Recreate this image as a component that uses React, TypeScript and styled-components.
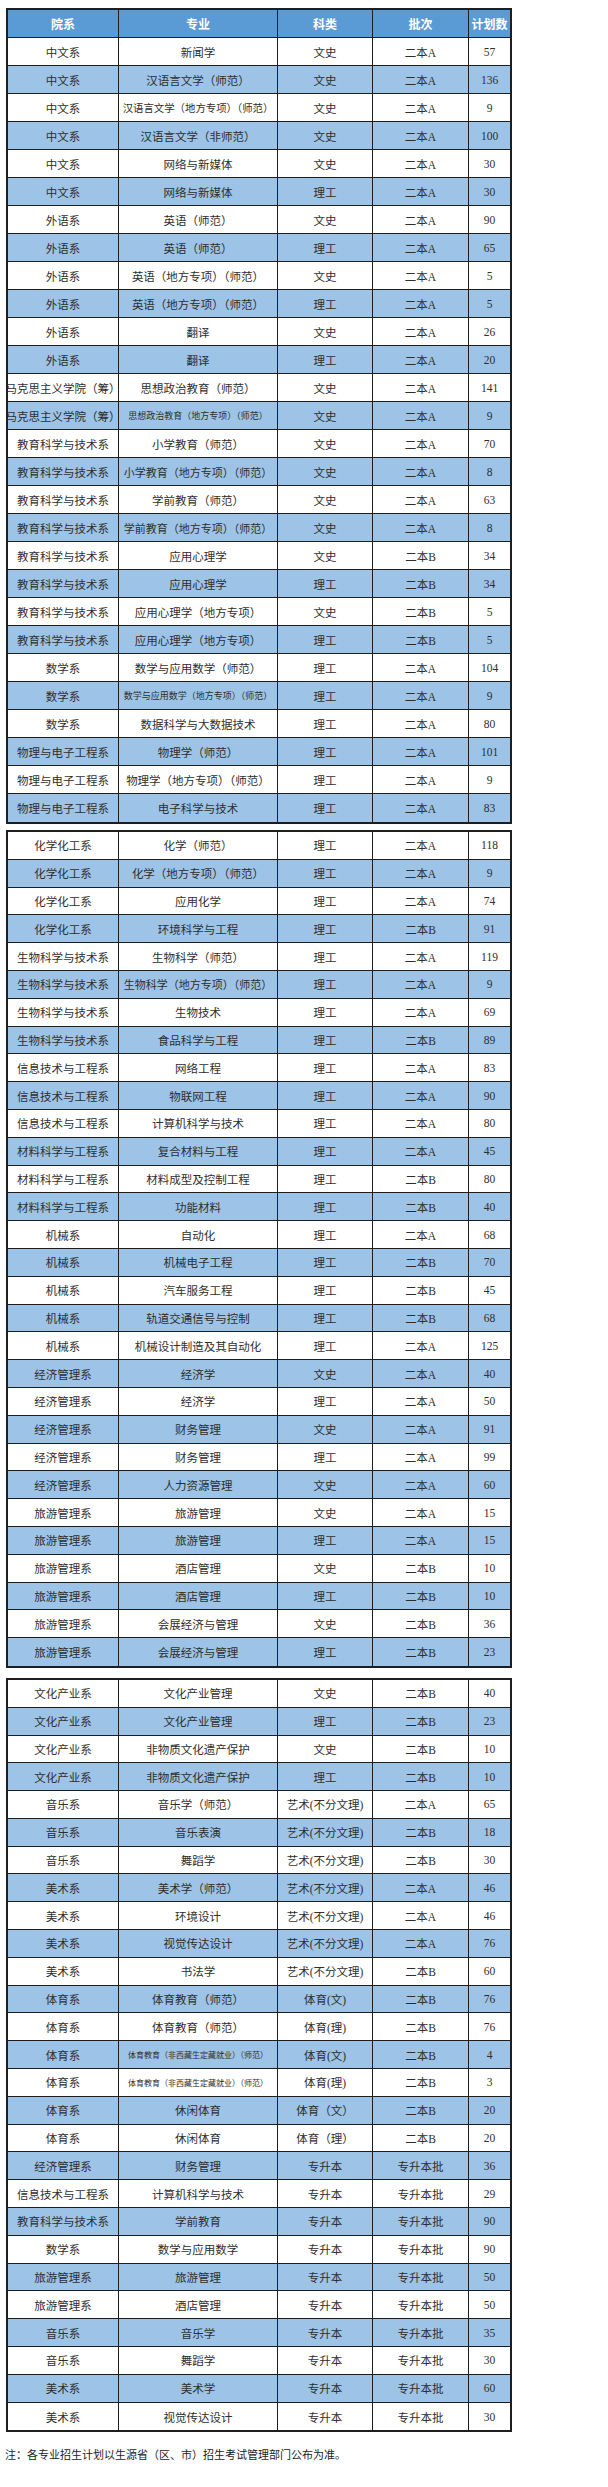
import React from "react";
import styled, { createGlobalStyle } from "styled-components";

type Row = [string, string, string, string, number, number?];

const tableOne: Row[] = [
  ["中文系", "新闻学", "文史", "二本A", 57],
  ["中文系", "汉语言文学（师范）", "文史", "二本A", 136],
  ["中文系", "汉语言文学（地方专项）（师范）", "文史", "二本A", 9, 10.4],
  ["中文系", "汉语言文学（非师范）", "文史", "二本A", 100],
  ["中文系", "网络与新媒体", "文史", "二本A", 30],
  ["中文系", "网络与新媒体", "理工", "二本A", 30],
  ["外语系", "英语（师范）", "文史", "二本A", 90],
  ["外语系", "英语（师范）", "理工", "二本A", 65],
  ["外语系", "英语（地方专项）（师范）", "文史", "二本A", 5],
  ["外语系", "英语（地方专项）（师范）", "理工", "二本A", 5],
  ["外语系", "翻译", "文史", "二本A", 26],
  ["外语系", "翻译", "理工", "二本A", 20],
  ["马克思主义学院（筹）", "思想政治教育（师范）", "文史", "二本A", 141],
  ["马克思主义学院（筹）", "思想政治教育（地方专项）（师范）", "文史", "二本A", 9, 9],
  ["教育科学与技术系", "小学教育（师范）", "文史", "二本A", 70],
  ["教育科学与技术系", "小学教育（地方专项）（师范）", "文史", "二本A", 8, 11],
  ["教育科学与技术系", "学前教育（师范）", "文史", "二本A", 63],
  ["教育科学与技术系", "学前教育（地方专项）（师范）", "文史", "二本A", 8, 11],
  ["教育科学与技术系", "应用心理学", "文史", "二本B", 34],
  ["教育科学与技术系", "应用心理学", "理工", "二本B", 34],
  ["教育科学与技术系", "应用心理学（地方专项）", "文史", "二本B", 5],
  ["教育科学与技术系", "应用心理学（地方专项）", "理工", "二本B", 5],
  ["数学系", "数学与应用数学（师范）", "理工", "二本A", 104],
  ["数学系", "数学与应用数学（地方专项）（师范）", "理工", "二本A", 9, 9],
  ["数学系", "数据科学与大数据技术", "理工", "二本A", 80],
  ["物理与电子工程系", "物理学（师范）", "理工", "二本A", 101],
  ["物理与电子工程系", "物理学（地方专项）（师范）", "理工", "二本A", 9],
  ["物理与电子工程系", "电子科学与技术", "理工", "二本A", 83],
];

const tableTwo: Row[] = [
  ["化学化工系", "化学（师范）", "理工", "二本A", 118],
  ["化学化工系", "化学（地方专项）（师范）", "理工", "二本A", 9],
  ["化学化工系", "应用化学", "理工", "二本A", 74],
  ["化学化工系", "环境科学与工程", "理工", "二本B", 91],
  ["生物科学与技术系", "生物科学（师范）", "理工", "二本A", 119],
  ["生物科学与技术系", "生物科学（地方专项）（师范）", "理工", "二本A", 9, 11],
  ["生物科学与技术系", "生物技术", "理工", "二本A", 69],
  ["生物科学与技术系", "食品科学与工程", "理工", "二本B", 89],
  ["信息技术与工程系", "网络工程", "理工", "二本A", 83],
  ["信息技术与工程系", "物联网工程", "理工", "二本A", 90],
  ["信息技术与工程系", "计算机科学与技术", "理工", "二本A", 80],
  ["材料科学与工程系", "复合材料与工程", "理工", "二本A", 45],
  ["材料科学与工程系", "材料成型及控制工程", "理工", "二本B", 80],
  ["材料科学与工程系", "功能材料", "理工", "二本B", 40],
  ["机械系", "自动化", "理工", "二本A", 68],
  ["机械系", "机械电子工程", "理工", "二本B", 70],
  ["机械系", "汽车服务工程", "理工", "二本B", 45],
  ["机械系", "轨道交通信号与控制", "理工", "二本B", 68],
  ["机械系", "机械设计制造及其自动化", "理工", "二本A", 125],
  ["经济管理系", "经济学", "文史", "二本A", 40],
  ["经济管理系", "经济学", "理工", "二本A", 50],
  ["经济管理系", "财务管理", "文史", "二本A", 91],
  ["经济管理系", "财务管理", "理工", "二本A", 99],
  ["经济管理系", "人力资源管理", "文史", "二本A", 60],
  ["旅游管理系", "旅游管理", "文史", "二本A", 15],
  ["旅游管理系", "旅游管理", "理工", "二本A", 15],
  ["旅游管理系", "酒店管理", "文史", "二本B", 10],
  ["旅游管理系", "酒店管理", "理工", "二本B", 10],
  ["旅游管理系", "会展经济与管理", "文史", "二本B", 36],
  ["旅游管理系", "会展经济与管理", "理工", "二本B", 23],
];

const tableThree: Row[] = [
  ["文化产业系", "文化产业管理", "文史", "二本B", 40],
  ["文化产业系", "文化产业管理", "理工", "二本B", 23],
  ["文化产业系", "非物质文化遗产保护", "文史", "二本B", 10],
  ["文化产业系", "非物质文化遗产保护", "理工", "二本B", 10],
  ["音乐系", "音乐学（师范）", "艺术(不分文理)", "二本A", 65],
  ["音乐系", "音乐表演", "艺术(不分文理)", "二本B", 18],
  ["音乐系", "舞蹈学", "艺术(不分文理)", "二本B", 30],
  ["美术系", "美术学（师范）", "艺术(不分文理)", "二本A", 46],
  ["美术系", "环境设计", "艺术(不分文理)", "二本A", 46],
  ["美术系", "视觉传达设计", "艺术(不分文理)", "二本A", 76],
  ["美术系", "书法学", "艺术(不分文理)", "二本B", 60],
  ["体育系", "体育教育（师范）", "体育(文)", "二本B", 76],
  ["体育系", "体育教育（师范）", "体育(理)", "二本B", 76],
  ["体育系", "体育教育（非西藏生定藏就业）（师范）", "体育(文)", "二本B", 4, 8],
  ["体育系", "体育教育（非西藏生定藏就业）（师范）", "体育(理)", "二本B", 3, 8],
  ["体育系", "休闲体育", "体育（文）", "二本B", 20],
  ["体育系", "休闲体育", "体育（理）", "二本B", 20],
  ["经济管理系", "财务管理", "专升本", "专升本批", 36],
  ["信息技术与工程系", "计算机科学与技术", "专升本", "专升本批", 29],
  ["教育科学与技术系", "学前教育", "专升本", "专升本批", 90],
  ["数学系", "数学与应用数学", "专升本", "专升本批", 90],
  ["旅游管理系", "旅游管理", "专升本", "专升本批", 50],
  ["旅游管理系", "酒店管理", "专升本", "专升本批", 50],
  ["音乐系", "音乐学", "专升本", "专升本批", 35],
  ["音乐系", "舞蹈学", "专升本", "专升本批", 30],
  ["美术系", "美术学", "专升本", "专升本批", 60],
  ["美术系", "视觉传达设计", "专升本", "专升本批", 30],
];

const headers = ["院系", "专业", "科类", "批次", "计划数"];

const GlobalStyle = createGlobalStyle`
  html, body {
    margin: 0;
    padding: 0;
    background: #ffffff;
  }
`;

const Page = styled.div`
  width: 608px;
  padding: 8px 0 30px 6px;
  box-sizing: border-box;
  display: flex;
  flex-direction: column;
  font-family: "Liberation Serif", "Noto Sans CJK SC", serif;
`;

const Table = styled.div<{ $gap: number }>`
  width: 506px;
  box-sizing: border-box;
  border: 2px solid #1e1e1e;
  display: flex;
  flex-direction: column;
  margin-top: ${(p) => p.$gap}px;
`;

const TableRow = styled.div<{ $tone: "head" | "white" | "blue"; $h: number }>`
  display: grid;
  grid-template-columns: 111px 159px 95px 96px 41px;
  height: ${(p) => p.$h}px;
  box-sizing: border-box;
  border-bottom: 1px solid #1e1e1e;
  background: ${(p) =>
    p.$tone === "head" ? "#5b9bd5" : p.$tone === "blue" ? "#9dc3e6" : "#ffffff"};

  &:last-child {
    border-bottom: none;
  }
`;

const Cell = styled.div<{ $size?: number }>`
  display: flex;
  align-items: center;
  justify-content: center;
  box-sizing: border-box;
  border-right: 1px solid #1e1e1e;
  white-space: nowrap;
  overflow: visible;
  font-size: ${(p) => p.$size ?? 11.5}px;
  color: #2e2e2e;

  &:last-child {
    border-right: none;
  }
`;

const HeadCell = styled(Cell)`
  font-family: "Noto Sans CJK SC", sans-serif;
  font-weight: 700;
  font-size: 12px;
  color: #ffffff;
`;

const Note = styled.p`
  margin: 14px 0 0 -1px;
  font-family: "Noto Sans CJK SC", sans-serif;
  font-size: 11px;
  color: #1c1c1c;
`;

const DataRows = ({ rows, h }: { rows: Row[]; h: number }) => (
  <>
    {rows.map(([dept, major, kind, batch, count, size], i) => (
      <TableRow key={i} $tone={i % 2 === 1 ? "blue" : "white"} $h={h}>
        <Cell>{dept}</Cell>
        <Cell $size={size}>{major}</Cell>
        <Cell>{kind}</Cell>
        <Cell>{batch}</Cell>
        <Cell>{count}</Cell>
      </TableRow>
    ))}
  </>
);

export default function App() {
  return (
    <>
      <GlobalStyle />
      <Page>
        <Table $gap={0}>
          <TableRow $tone="head" $h={28}>
            {headers.map((h) => (
              <HeadCell key={h}>{h}</HeadCell>
            ))}
          </TableRow>
          <DataRows rows={tableOne} h={28} />
        </Table>
        <Table $gap={6}>
          <DataRows rows={tableTwo} h={27.8} />
        </Table>
        <Table $gap={10}>
          <DataRows rows={tableThree} h={27.8} />
        </Table>
        <Note>注：各专业招生计划以生源省（区、市）招生考试管理部门公布为准。</Note>
      </Page>
    </>
  );
}
